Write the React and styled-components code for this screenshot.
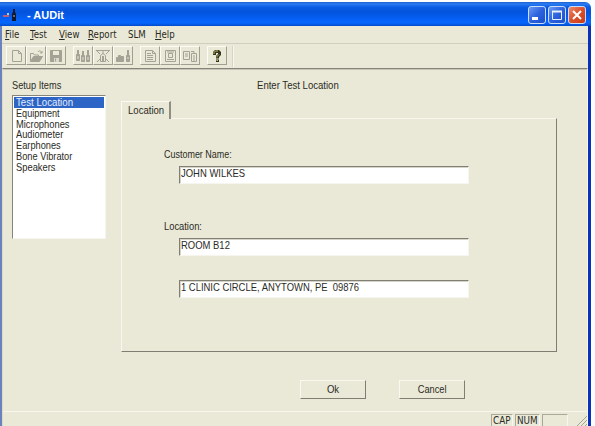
import React from 'react';
import styled, { createGlobalStyle } from 'styled-components';

const GlobalStyle = createGlobalStyle`
  body {
    margin: 0;
    background: #fdfdfd;
    overflow: hidden;
  }
  * {
    box-sizing: border-box;
  }
`;

const Window = styled.div`
  display: flex;
  flex-direction: column;
  width: 591px;
  height: 424px;
  margin-top: 2px;
  background: #eae9d8;
  border-radius: 0 6px 0 0;
  overflow: hidden;
  color: #2b2b24;
  font-family: 'Liberation Sans', Arial, sans-serif;
  font-size: 11px;
  line-height: 11px;
`;

// the form font is a condensed sans
const Text = styled.span`
  display: inline-block;
  white-space: pre;
  transform: scaleX(${(props) => props.$scale || 0.85});
  transform-origin: ${(props) => (props.$center ? 'center' : 'left')};
`;

const TitleBar = styled.div`
  display: flex;
  flex: none;
  align-items: center;
  height: 24px;
  padding: 2px 5px 0 2px;
  background: linear-gradient(
    #1c5fd0 0,
    #2a7df2 2px,
    #0a5ce4 5px,
    #0353dc 10px,
    #0560f6 17px,
    #0566fc 21px,
    #0349c8 24px
  );

  svg {
    flex: none;
  }
`;

const Title = styled.div`
  flex: 1;
  margin-left: 10px;
  color: #ffffff;
  font-size: 11px;
  font-weight: 700;
  white-space: pre;
`;

const Controls = styled.div`
  display: flex;
  gap: 2px;
`;

const ControlButton = styled.div`
  width: 18px;
  height: 18px;
  border: 1px solid #c9dcfa;
  border-radius: 3px;
  background: ${(props) =>
    props.$close
      ? 'linear-gradient(135deg, #ee8b6a, #dc4f2a 50%, #c53d17)'
      : 'linear-gradient(135deg, #6a9af5, #2c62dc 50%, #1c50ce)'};

  svg {
    display: block;
  }
`;

const Body = styled.div`
  display: flex;
  flex: 1;
  flex-direction: column;
  min-height: 0;
  border-left: 2px solid #6a83bd;
  border-right: 3px solid #0a32b8;
`;

const MenuBar = styled.div`
  display: flex;
  flex: none;
  height: 18px;
  padding: 3px 0 0 3px;
  border-bottom: 1px solid #cfcebf;
  font-family: 'DejaVu Sans Condensed', 'DejaVu Sans', sans-serif;
  font-size: 9.6px;

  u {
    text-underline-offset: 1px;
  }
`;

const MenuItem = styled.div`
  flex: none;
  width: ${(props) => props.$width}px;
`;

const ToolBar = styled.div`
  display: flex;
  flex: none;
  gap: 7px;
  height: 24px;
  padding: 2px 0 0 4px;
`;

const ToolGroup = styled.div`
  display: flex;
  height: 19px;
`;

const ToolButton = styled.div`
  display: flex;
  align-items: center;
  justify-content: center;
  width: 20px;
  border: 1px solid;
  border-color: #fcfbf4 #a09f90 #a09f90 #fcfbf4;
`;

const Divider = styled.div`
  width: 2px;
  height: 21px;
  margin-left: -2px;
  background: #f9f8f0;
  border-left: 1px solid #d6d5c5;
`;

const Client = styled.div`
  display: flex;
  flex: 1;
  flex-direction: column;
  min-height: 0;
  border-top: 1px solid #85847a;
  border-left: 1px solid #dddccb;
  border-right: 1px solid #f7f6ee;
  box-shadow: inset 0 1px 0 #c6c5b6;
`;

const Main = styled.div`
  display: flex;
  flex: none;
  gap: 15px;
  height: 283px;
  padding: 11px 0 0 9px;
`;

const Side = styled.div`
  width: 94px;
`;

const SideTitle = styled.div`
  height: 11px;
`;

const ListBox = styled.div`
  height: 144px;
  margin-top: 4px;
  padding: 1px 1px 0 1px;
  background: #ffffff;
  border: 1px solid;
  border-color: #85847a #f6f5ee #f6f5ee #85847a;
`;

const ListItem = styled.div`
  height: 10.8px;
  padding-left: 2px;
  line-height: 11px;
  color: ${(props) => (props.$selected ? '#e4edfb' : 'inherit')};
  background: ${(props) => (props.$selected ? '#2d65c6' : 'transparent')};
`;

const Content = styled.div`
  width: 436px;
`;

const Heading = styled.div`
  height: 21px;
  padding-left: 136px;
`;

const Tab = styled.div`
  width: 50px;
  height: 18px;
  margin-bottom: -1px;
  padding: 3px 0 0 6px;
  position: relative;
  background: #eae9d8;
  border: solid;
  border-width: 1px 2px 0 1px;
  border-color: #fbfaf2 #8f8e80 #fbfaf2 #fbfaf2;
`;

const TabPanel = styled.div`
  height: 234px;
  padding: 30px 0 0 42px;
  border: 1px solid;
  border-color: #f9f8f0 #7f7e70 #7f7e70 #f9f8f0;
`;

const Field = styled.div`
  margin-bottom: ${(props) => props.$gap}px;
`;

const Label = styled.div`
  height: 17px;
`;

const Input = styled.div`
  width: 290px;
  height: 18px;
  margin-left: 15px;
  padding: 1px 0 0 1px;
  background: #ffffff;
  border: 1px solid;
  border-color: #807f72 #f6f5ee #f6f5ee #807f72;
  box-shadow: inset 1px 1px 0 #d5d4ca;
`;

const Actions = styled.div`
  display: flex;
  flex: none;
  gap: 33px;
  height: 59px;
  padding: 28px 0 0 297px;
`;

const Button = styled.div`
  width: 66px;
  height: 19px;
  padding-top: 3px;
  border: 1px solid;
  border-color: #faf9f0 #7f7e70 #7f7e70 #faf9f0;
  text-align: center;
`;

const StatusBar = styled.div`
  display: flex;
  flex: 1;
  gap: 2px;
  justify-content: flex-end;
  padding-top: 2px;
  border-top: 1px solid #f8f7ee;
  font-family: 'DejaVu Sans Condensed', 'DejaVu Sans', sans-serif;
  font-size: 9.8px;
`;

const Pane = styled.div`
  width: ${(props) => props.$width}px;
  height: 14px;
  padding-left: 1px;
  border: 1px solid;
  border-color: #a9a899 #f8f7ee #f8f7ee #a9a899;
`;

const Grip = styled.svg`
  flex: none;
  margin-left: 6px;
`;

const AppIcon = () => (
  <svg width="15" height="14" viewBox="0 0 15 14">
    <path d="M1 7h4v-2h2v4H1z" fill="#b9c6e8" />
    <path d="M1 8h6" stroke="#c13c4a" strokeWidth="1.5" />
    <path d="M11 1h2v3l1 2v7h-4V6l1-2z" fill="#10182e" />
    <path d="M11 8h2" stroke="#b8b8a0" />
  </svg>
);

const icons = {
  new: <path d="M3.5 1.5h6l3 3v8h-9zM9.5 1.5v3h3" />,
  open: (
    <>
      <path d="M1.5 12V4.5h3l1 1.5h4v2M9 3c1-2 3-1 4 1M13 2v2h-2" />
      <path d="M1.5 12.5l3-5h9l-3 5z" fill="#a3a294" />
    </>
  ),
  save: (
    <>
      <path d="M1.5 1.5h11v11h-11z" fill="#a3a294" />
      <path d="M4 2h6v4H4z" fill="#eae9d8" stroke="none" />
      <path d="M5 9h5v4H5z" fill="#dad9ca" stroke="none" />
      <path d="M6.5 9.5v3" />
    </>
  ),
  bottles: (
    <>
      <path d="M2 1v5M7 2v5M12 1v6" strokeWidth="2" />
      <path d="M.5 5.5h3v6h-3zM5.5 6.5h3v6h-3zM10.5 6.5h3v6h-3z" fill="#a3a294" />
      <path d="M2 7v3M7 8v3M12 8v3" stroke="#e4e3d3" />
    </>
  ),
  probe: (
    <>
      <path d="M0 1.5h14M1 2l3 3M13 2l-3 3M1 13l3-3M13 13l-3-3" />
      <path d="M7 2v3M4.5 6.5l2.5-2 2.5 2v6h-5z" />
      <path d="M7 7v5" strokeWidth="2" />
    </>
  ),
  level: (
    <>
      <path d="M.5 8.5h2v-2h2v1h3v5h-7zM10.5 6.5h3v6h-3z" fill="#a3a294" />
      <path d="M12 1v5" strokeWidth="2" />
      <path d="M11 9h2" stroke="#e4e3d3" />
    </>
  ),
  page: (
    <>
      <path d="M2.5 1.5h7l3 3v8h-10zM9.5 1.5v3h3" />
      <path d="M4 4.5h4M4 6.5h6M4 8.5h6M4 10.5h6" />
    </>
  ),
  report: (
    <>
      <path d="M2.5 1.5h10v11h-10z" />
      <path d="M5.5 4.5h4v4h-4zM4 3h7M4 10.5h7" />
    </>
  ),
  copy: (
    <path d="M.5 2.5h6v8h-6zM2 5h3M2 7h3M8.5 4.5h5v8h-5zM10 7h2M10 9h2M10 11h2M8 2.5h3v2" />
  ),
};

const ToolIcon = ({ name }) => (
  <svg width="14" height="14" viewBox="0 0 14 14" fill="none" stroke="#a3a294">
    {icons[name]}
  </svg>
);

const HelpIcon = () => (
  <svg width="12" height="14" viewBox="0 0 12 14">
    <path d="M2 6V3l2-2h4l2 2v3L8 8v1.500H5V7l2-2V4H5v2z" fill="#34331f" />
    <path d="M5 10.500h3V13H5z" fill="#34331f" />
    <path d="M3 5V3.500L4.500 2H7M6 8.500V7.500L8 5.500" fill="none" stroke="#c9c15a" />
    <path d="M5.500 11.500h1.500" stroke="#c9c15a" />
  </svg>
);

const toolGroups = [
  ['new', 'open', 'save'],
  ['bottles', 'probe', 'level'],
  ['page', 'report', 'copy'],
];

const setupItems = [
  { name: 'Test Location', scale: 0.88 },
  { name: 'Equipment', scale: 0.83 },
  { name: 'Microphones', scale: 0.85 },
  { name: 'Audiometer', scale: 0.84 },
  { name: 'Earphones', scale: 0.84 },
  { name: 'Bone Vibrator', scale: 0.84 },
  { name: 'Speakers', scale: 0.85 },
];

const App = () => {
  return (
    <>
      <GlobalStyle />
      <Window>
        <TitleBar>
          <AppIcon />
          <Title>- AUDit</Title>
          <Controls>
            <ControlButton>
              <svg width="16" height="16">
                <path d="M3 11.5h6" stroke="#fff" strokeWidth="3" />
              </svg>
            </ControlButton>
            <ControlButton>
              <svg width="16" height="16" fill="none" stroke="#e8effc">
                <path d="M3.5 4.5h9v8h-9z" />
                <path d="M3 4.5h10" strokeWidth="2" />
              </svg>
            </ControlButton>
            <ControlButton $close>
              <svg width="16" height="16">
                <path d="M4 4l8 8M12 4l-8 8" stroke="#fff" strokeWidth="2" />
              </svg>
            </ControlButton>
          </Controls>
        </TitleBar>
        <Body>
          <MenuBar>
            <MenuItem $width={25}><u>F</u>ile</MenuItem>
            <MenuItem $width={29}><u>T</u>est</MenuItem>
            <MenuItem $width={29}><u>V</u>iew</MenuItem>
            <MenuItem $width={40}><u>R</u>eport</MenuItem>
            <MenuItem $width={27}>SLM</MenuItem>
            <MenuItem $width={30}><u>H</u>elp</MenuItem>
          </MenuBar>
          <ToolBar>
            {toolGroups.map((group) => (
              <ToolGroup key={group[0]}>
                {group.map((name) => (
                  <ToolButton key={name}>
                    <ToolIcon name={name} />
                  </ToolButton>
                ))}
              </ToolGroup>
            ))}
            <ToolGroup>
              <ToolButton>
                <HelpIcon />
              </ToolButton>
            </ToolGroup>
            <Divider />
          </ToolBar>
          <Client>
            <Main>
              <Side>
                <SideTitle>
                  <Text $scale={0.84}>Setup Items</Text>
                </SideTitle>
                <ListBox>
                  {setupItems.map((item, i) => (
                    <ListItem key={item.name} $selected={i === 0}>
                      <Text $scale={item.scale}>{item.name}</Text>
                    </ListItem>
                  ))}
                </ListBox>
              </Side>
              <Content>
                <Heading>
                  <Text $scale={0.87}>Enter Test Location</Text>
                </Heading>
                <Tab>
                  <Text $scale={0.87}>Location</Text>
                </Tab>
                <TabPanel>
                  <Field $gap={37}>
                    <Label>
                      <Text $scale={0.815}>Customer Name:</Text>
                    </Label>
                    <Input>
                      <Text $scale={0.86}>JOHN WILKES</Text>
                    </Input>
                  </Field>
                  <Field $gap={24}>
                    <Label>
                      <Text $scale={0.85}>Location:</Text>
                    </Label>
                    <Input>
                      <Text $scale={0.86}>ROOM B12</Text>
                    </Input>
                  </Field>
                  <Input>
                    <Text $scale={0.857}>1 CLINIC CIRCLE, ANYTOWN, PE  09876</Text>
                  </Input>
                </TabPanel>
              </Content>
            </Main>
            <Actions>
              <Button>
                <Text $center $scale={0.87}>Ok</Text>
              </Button>
              <Button>
                <Text $center $scale={0.84}>Cancel</Text>
              </Button>
            </Actions>
            <StatusBar>
              <Pane $width={22}>CAP</Pane>
              <Pane $width={25}>NUM</Pane>
              <Pane $width={26} />
              <Grip width="11" height="12" stroke="#a5a494">
                <path d="M1 12L11 2M5 12l6-6M9 12l2-2" />
              </Grip>
            </StatusBar>
          </Client>
        </Body>
      </Window>
    </>
  );
};

export default App;
